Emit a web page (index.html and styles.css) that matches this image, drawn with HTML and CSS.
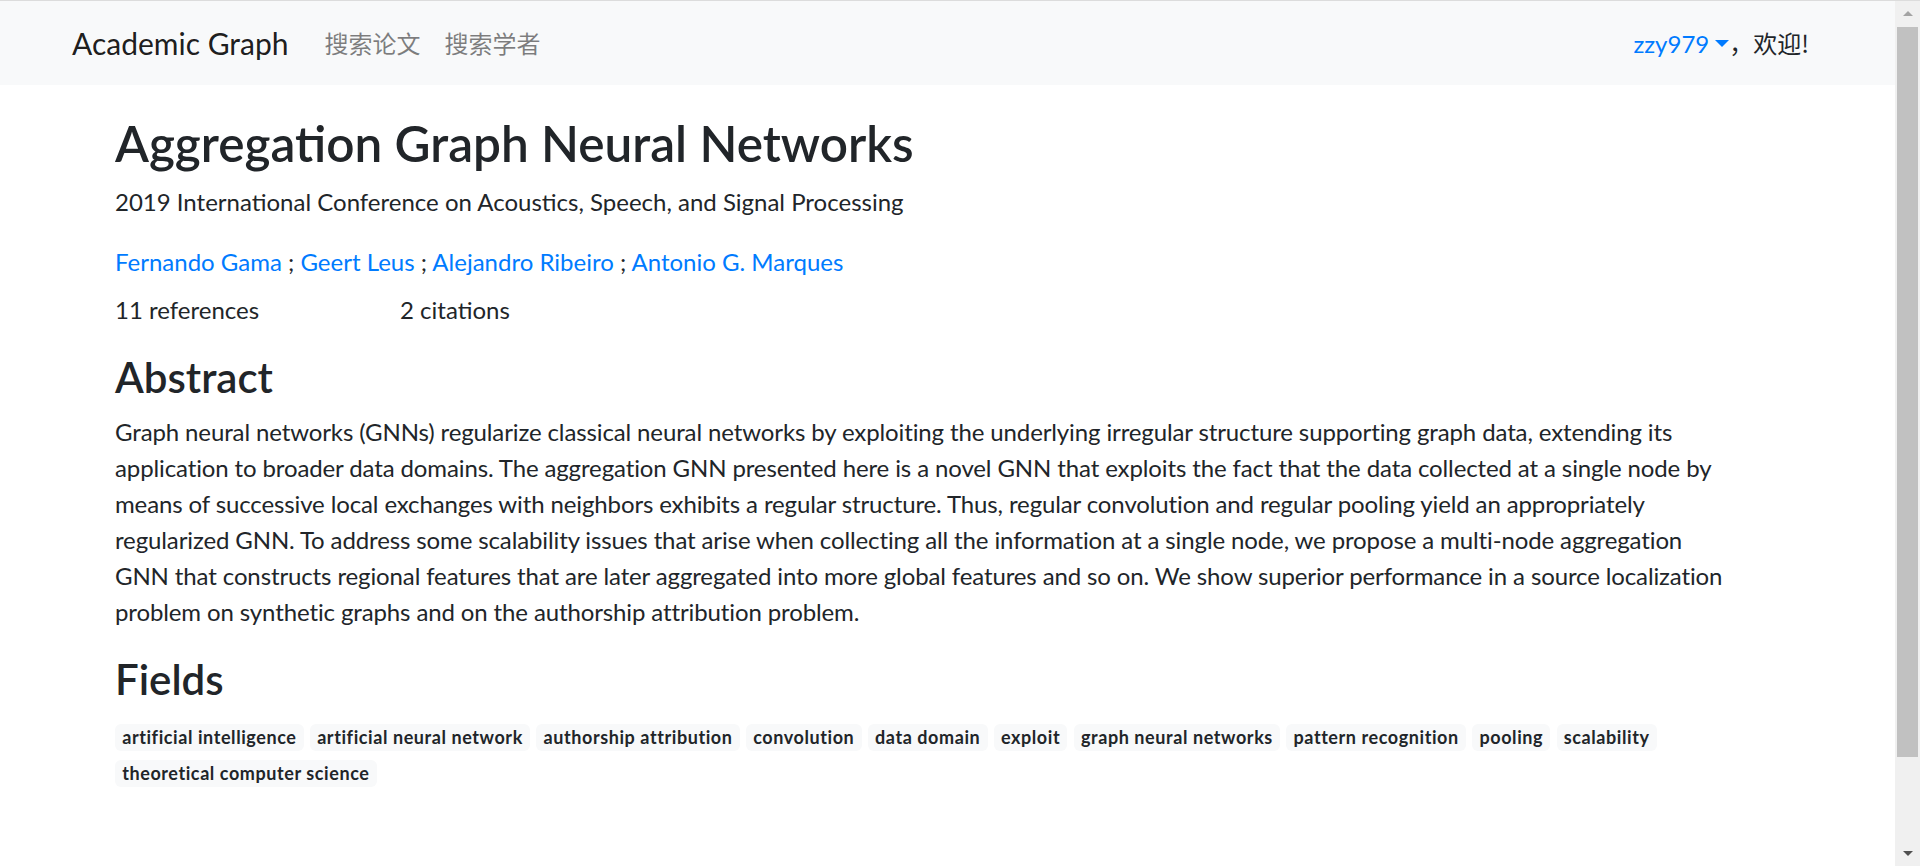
FILE: index.html
```html
<!DOCTYPE html>
<html lang="zh-CN">
<head>
<meta charset="utf-8">
<title>Aggregation Graph Neural Networks - Academic Graph</title>
<link rel="stylesheet" href="styles.css">
</head>
<body>
<div class="page">
  <nav class="navbar">
    <a class="brand" href="#">Academic Graph</a>
    <ul class="nav">
      <li><a class="nav-link" href="#">搜索论文</a></li>
      <li><a class="nav-link" href="#">搜索学者</a></li>
    </ul>
    <div class="user">
      <a class="user-link" href="#">zzy979<span class="caret"></span></a><span class="welcome">，欢迎!</span>
    </div>
  </nav>

  <main class="container">
    <h1 class="title">Aggregation Graph Neural Networks</h1>
    <p class="venue">2019 International Conference on Acoustics, Speech, and Signal Processing</p>
    <p class="authors"><a href="#">Fernando Gama</a> ; <a href="#">Geert Leus</a> ; <a href="#">Alejandro Ribeiro</a> ; <a href="#">Antonio G. Marques</a></p>
    <div class="stats">
      <div class="stat">11 references</div>
      <div class="stat">2 citations</div>
    </div>

    <h3 class="section-title">Abstract</h3>
    <p class="abstract">Graph neural networks (GNNs) regularize classical neural networks by exploiting the underlying irregular structure supporting graph data, extending its<br>
application to broader data domains. The aggregation GNN presented here is a novel GNN that exploits the fact that the data collected at a single node by<br>
means of successive local exchanges with neighbors exhibits a regular structure. Thus, regular convolution and regular pooling yield an appropriately<br>
regularized GNN. To address some scalability issues that arise when collecting all the information at a single node, we propose a multi-node aggregation<br>
GNN that constructs regional features that are later aggregated into more global features and so on. We show superior performance in a source localization<br>
problem on synthetic graphs and on the authorship attribution problem.</p>

    <h3 class="section-title">Fields</h3>
    <div class="fields">
      <span class="badge">artificial intelligence</span>
      <span class="badge">artificial neural network</span>
      <span class="badge">authorship attribution</span>
      <span class="badge">convolution</span>
      <span class="badge">data domain</span>
      <span class="badge">exploit</span>
      <span class="badge">graph neural networks</span>
      <span class="badge">pattern recognition</span>
      <span class="badge">pooling</span>
      <span class="badge">scalability</span>
      <span class="badge">theoretical computer science</span>
    </div>
  </main>
</div>
<div class="scrollbar">
  <div class="sb-btn"><svg width="10" height="5" viewBox="0 0 10 5"><polygon points="0,5 10,5 5,0" fill="#a3a3a3"/></svg></div>
  <div class="sb-track"><div class="sb-thumb"></div></div>
  <div class="sb-btn"><svg width="10" height="5" viewBox="0 0 10 5"><polygon points="0,0 10,0 5,5" fill="#505050"/></svg></div>
</div>
</body>
</html>
```
FILE: styles.css
```css
* { box-sizing: border-box; }

html, body { height: 100%; }

body {
  margin: 0;
  border-top: 1px solid #dcdcdc;
  display: flex;
  overflow: hidden;
  font-family: Lato, "Noto Sans CJK SC", sans-serif;
  font-size: 24px;
  line-height: 36px;
  color: #212529;
  background: #fff;
}

a { color: #007bff; text-decoration: none; }

.page { flex: 1; min-width: 0; }

/* navbar */
.navbar {
  height: 84px;
  background: #f8f9fa;
  display: flex;
  align-items: center;
  padding: 0 86px 0 72px;
}
.brand {
  font-size: 30px;
  line-height: 45px;
  color: rgba(0, 0, 0, .9);
  margin-right: 24px;
}
.nav {
  list-style: none;
  margin: 0;
  padding: 0;
  display: flex;
}
.nav-link {
  display: block;
  padding: 0 12px;
  color: rgba(0, 0, 0, .5);
  font-family: "Noto Sans CJK SC", sans-serif;
}
.user { margin-left: auto; }
.user-link { color: #007bff; }
.caret {
  display: inline-block;
  margin-left: 6px;
  vertical-align: 6px;
  border-top: 7px solid #007bff;
  border-left: 7px solid transparent;
  border-right: 7px solid transparent;
}
.welcome {
  color: #212529;
  font-family: "Noto Sans CJK SC", sans-serif;
}

/* content */
.container {
  max-width: 1710px;
  margin: 0 auto;
  padding: 0 22.5px;
}
.title {
  font-size: 49.5px;
  font-weight: 600;
  line-height: 1.2;
  margin: 29px 0 10.5px;
}
.venue { margin: 0 0 24px; }
.authors { margin: 0 0 12px; }
.stats { display: flex; margin-bottom: 24px; }
.stat { width: 285px; }
.section-title {
  font-size: 42px;
  font-weight: 600;
  line-height: 1.2;
  margin: 0 0 12px;
}
.abstract { margin: 0 0 24px; letter-spacing: -0.12px; white-space: nowrap; }

.fields {
  display: flex;
  flex-wrap: wrap;
  gap: 9px 6.3px;
  padding-top: 7px;
}
.badge {
  display: inline-block;
  font-size: 18px;
  font-weight: 700;
  letter-spacing: 0.58px;
  line-height: 1;
  padding: 4.5px 7.2px;
  border-radius: 6px;
  background: #f8f9fa;
  color: #212529;
  white-space: nowrap;
}

/* scrollbar */
.scrollbar {
  width: 25px;
  flex: none;
  background: #f0f0f0;
  display: flex;
  flex-direction: column;
}
.sb-btn {
  height: 25px;
  display: flex;
  align-items: center;
  justify-content: center;
  flex: none;
}
.sb-track { flex: 1; padding: 1px 2px 0; }
.sb-thumb { height: 730px; background: #c1c1c1; }
```
